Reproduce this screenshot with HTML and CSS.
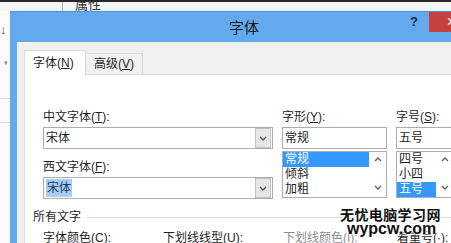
FILE: index.html
```html
<!DOCTYPE html>
<html lang="zh-CN">

<head>
    <meta charset="UTF-8">
    <title>字体</title>
    <link rel="stylesheet" href="styles.css">
</head>

<body>
    <div class="screen">
        <div class="topbar">
            <span class="topbar-sep"></span>
            <span class="topbar-title">属性</span>
        </div>
        <div class="main">
            <div class="doc-side">
                <span class="doc-arrow">↓</span>
                <span class="doc-caret">▾</span>
                <span class="doc-rule first"></span>
                <span class="doc-rule"></span>
            </div>
            <div class="dialog">
                <div class="titlebar">
                    <span class="title">字体</span>
                    <span class="help">?</span>
                    <span class="close">×</span>
                </div>
                <div class="dialog-body">
                    <div class="tabs">
                        <div class="tab active">字体(<u>N</u>)</div>
                        <div class="tab">高级(<u>V</u>)</div>
                    </div>
                    <div class="panel">
                        <div class="font-grid">
                            <div class="col col-cn">
                                <div class="label">中文字体(<u>T</u>):</div>
                                <div class="field combo">
                                    <span class="field-text">宋体</span>
                                    <span class="combo-btn">
                                        <svg width="8" height="5" viewBox="0 0 8 5"><path d="M1 1 L4 4 L7 1" fill="none" stroke="#555" stroke-width="1.3"/></svg>
                                    </span>
                                </div>
                                <div class="label gap">西文字体(<u>F</u>):</div>
                                <div class="field combo">
                                    <span class="field-text"><span class="sel-text">宋体</span></span>
                                    <span class="combo-btn">
                                        <svg width="8" height="5" viewBox="0 0 8 5"><path d="M1 1 L4 4 L7 1" fill="none" stroke="#555" stroke-width="1.3"/></svg>
                                    </span>
                                </div>
                            </div>
                            <div class="col col-style">
                                <div class="label">字形(<u>Y</u>):</div>
                                <div class="field"><span class="field-text">常规</span></div>
                                <div class="listbox">
                                    <ul class="list-items">
                                        <li class="selected">常规</li>
                                        <li>倾斜</li>
                                        <li>加粗</li>
                                    </ul>
                                    <div class="scroll">
                                        <svg width="8" height="5" viewBox="0 0 8 5"><path d="M1 4 L4 1 L7 4" fill="none" stroke="#606060" stroke-width="1.3"/></svg>
                                        <svg width="8" height="5" viewBox="0 0 8 5"><path d="M1 1 L4 4 L7 1" fill="none" stroke="#606060" stroke-width="1.3"/></svg>
                                    </div>
                                </div>
                            </div>
                            <div class="col col-size">
                                <div class="label">字号(<u>S</u>):</div>
                                <div class="field"><span class="field-text">五号</span></div>
                                <div class="listbox">
                                    <ul class="list-items">
                                        <li>四号</li>
                                        <li>小四</li>
                                        <li class="selected">五号</li>
                                    </ul>
                                    <div class="scroll">
                                        <svg width="8" height="5" viewBox="0 0 8 5"><path d="M1 4 L4 1 L7 4" fill="none" stroke="#606060" stroke-width="1.3"/></svg>
                                        <svg width="8" height="5" viewBox="0 0 8 5"><path d="M1 1 L4 4 L7 1" fill="none" stroke="#606060" stroke-width="1.3"/></svg>
                                    </div>
                                </div>
                            </div>
                        </div>
                        <div class="group-head">
                            <span>所有文字</span>
                            <span class="group-line"></span>
                        </div>
                        <div class="bottom-row">
                            <span>字体颜色(<u>C</u>):</span>
                            <span>下划线线型(<u>U</u>):</span>
                            <span class="disabled">下划线颜色(<u>I</u>):</span>
                            <span>着重号(·):</span>
                        </div>
                    </div>
                </div>
            </div>
        </div>
        <!-- 水印 -->
        <div class="watermark">
            <div class="wm-cn">无忧电脑学习网</div>
            <div class="wm-en">wypcw.com</div>
        </div>
    </div>
</body>

</html>
```

FILE: styles.css
```css
* {
    box-sizing: border-box;
}

body {
    margin: 0;
    font-family: "Liberation Sans", "Noto Sans CJK SC", sans-serif;
    font-size: 12px;
    color: #1e1e1e;
}

u {
    text-decoration: underline;
    text-underline-offset: 1px;
}

.screen {
    width: 451px;
    height: 243px;
    overflow: hidden;
    position: relative;
    background: #fafafa;
}

.topbar {
    height: 11px;
    border-top: 2px solid #2a2a2a;
    background: #f5f5f5;
    display: flex;
    overflow: hidden;
}

.topbar-sep {
    width: 1px;
    margin-left: 62px;
    background: #b9b9b9;
}

.topbar-title {
    margin-left: 12px;
    margin-top: -4px;
    font-size: 13px;
    line-height: 13px;
    color: #333;
}

.main {
    display: flex;
    height: 232px;
}

.doc-side {
    width: 10px;
    flex: none;
    display: flex;
    flex-direction: column;
    background: #fbfbfb;
}

.doc-arrow {
    margin-top: 12px;
    font-size: 13px;
    line-height: 14px;
    color: #555;
}

.doc-caret {
    margin-top: 23px;
    padding-left: 4px;
    font-size: 7px;
    line-height: 6px;
    color: #888;
}

.doc-rule {
    height: 1px;
    margin-top: 23px;
    background: #dadada;
}

.doc-rule.first {
    margin-top: 32px;
}

.dialog {
    width: 470px;
    flex: none;
    background: #64a9ee;
    border-top: 1px solid #4d93dc;
    display: flex;
    flex-direction: column;
}

.titlebar {
    height: 30px;
    display: flex;
    align-items: flex-start;
}

.title {
    margin-left: 219px;
    font-family: "Noto Sans CJK SC", sans-serif;
    font-size: 15px;
    line-height: 30px;
    color: #1b1b1b;
}

.help {
    margin-left: auto;
    margin-right: 11px;
    margin-top: 2px;
    font-size: 13px;
    font-weight: bold;
    line-height: 16px;
    color: #1a2a44;
}

.close {
    width: 45px;
    height: 20px;
    margin-right: 6px;
    background: #c7413b;
    color: #fff;
    text-align: center;
    font-size: 16px;
    line-height: 20px;
}

.dialog-body {
    flex: 1;
    margin-left: 7px;
    background: #f0f0f0;
    padding: 8px 0 0 7px;
    display: flex;
    flex-direction: column;
}

.tabs {
    display: flex;
    align-items: flex-end;
    margin-bottom: -1px;
    position: relative;
    z-index: 1;
}

.tab {
    height: 22px;
    padding: 0 8px;
    border: 1px solid #d9d9d9;
    border-left: none;
    background: #f0f0f0;
    line-height: 20px;
}

.tab.active {
    width: 62px;
    height: 25px;
    padding: 0 8px;
    border-left: 1px solid #d9d9d9;
    border-bottom: none;
    background: #fff;
    line-height: 25px;
}

.panel {
    flex: 1;
    border-top: 1px solid #d9d9d9;
    border-left: 1px solid #d9d9d9;
    background: #fff;
    padding: 34px 0 0 18px;
}

.font-grid {
    display: flex;
    gap: 9px;
}

.col {
    display: flex;
    flex-direction: column;
    flex: none;
}

.col-cn {
    width: 230px;
}

.col-style {
    width: 105px;
}

.col-size {
    width: 58px;
}

.label {
    height: 16px;
    line-height: 16px;
    margin-bottom: 2px;
}

.label.gap {
    margin-top: 10px;
}

.field {
    height: 22px;
    border: 1px solid #abadb3;
    background: #fff;
    display: flex;
    align-items: center;
}

.field-text {
    flex: 1;
    padding-left: 2px;
    line-height: 18px;
}

.sel-text {
    display: inline-block;
    padding: 0 1px;
    background: #a9cdf0;
    color: #163a66;
}

.combo-btn {
    width: 16px;
    height: 20px;
    margin-right: 1px;
    border: 1px solid #c3c3c3;
    background: #e6e6e6;
    display: flex;
    align-items: center;
    justify-content: center;
}

.listbox {
    height: 47px;
    margin-top: 2px;
    border: 1px solid #abadb3;
    background: #fff;
    display: flex;
}

.list-items {
    flex: 1;
    margin: 0;
    padding: 0;
    list-style: none;
}

.list-items li {
    height: 15px;
    line-height: 15px;
    padding-left: 2px;
}

.list-items li.selected {
    background: #3399ff;
    color: #fff;
}

.scroll {
    width: 17px;
    flex: none;
    display: flex;
    flex-direction: column;
    align-items: center;
    justify-content: space-between;
    padding: 5px 0 7px;
}

.group-head {
    display: flex;
    align-items: center;
    gap: 6px;
    margin: 10px 0 0 -10px;
    line-height: 16px;
}

.group-line {
    flex: 1;
    height: 1px;
    background: #dcdcdc;
}

.bottom-row {
    display: grid;
    grid-template-columns: 120px 120px 114px auto;
    margin-top: 5px;
    line-height: 16px;
}

.bottom-row .disabled {
    color: #8d8d8d;
}

.watermark {
    position: absolute;
    left: 340px;
    top: 207px;
    color: #111;
    text-shadow: 0 0 2px #fff, 0 0 2px #fff, 0 0 3px #fff;
}

.wm-cn {
    font-family: "Noto Sans CJK SC", sans-serif;
    font-weight: bold;
    font-size: 14px;
    letter-spacing: 0.4px;
    line-height: 15px;
}

.wm-en {
    padding-left: 7px;
    font-family: "Liberation Sans", sans-serif;
    font-weight: bold;
    font-size: 16px;
    line-height: 13px;
}
```
